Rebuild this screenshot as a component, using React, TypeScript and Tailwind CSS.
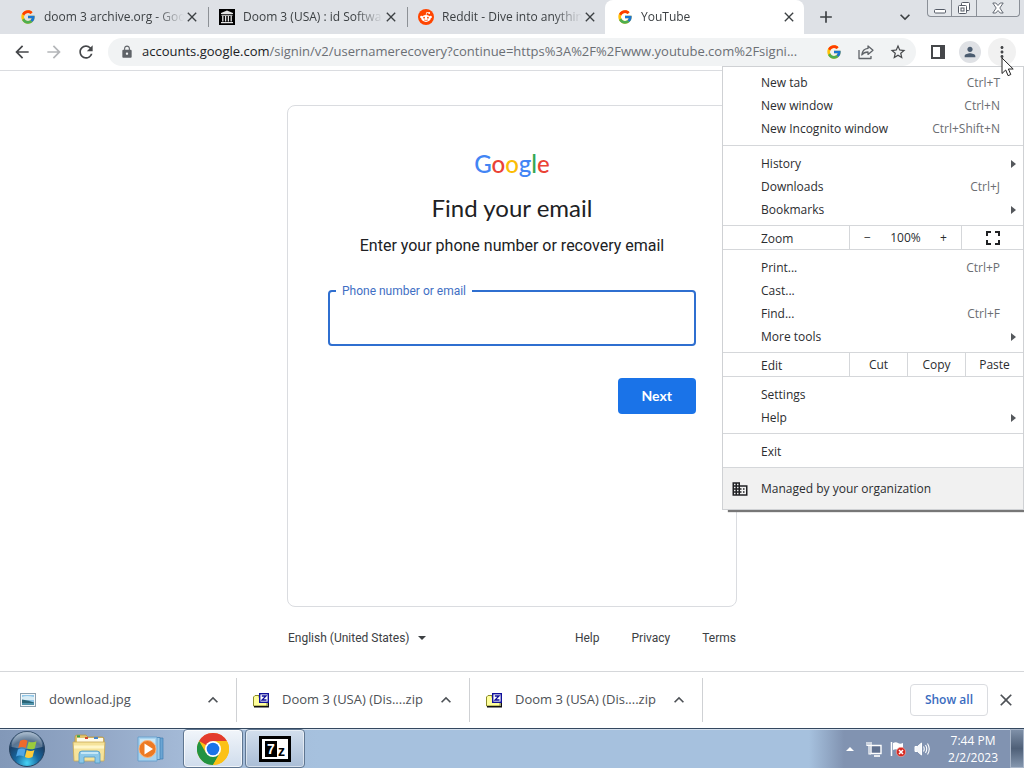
import type { ReactNode } from 'react';
import { FcGoogle } from 'react-icons/fc';
import {
  MdAdd,
  MdArrowBack,
  MdArrowForward,
  MdClose,
  MdDomain,
  MdExpandLess,
  MdExpandMore,
  MdLock,
  MdMoreVert,
  MdPerson,
  MdRefresh,
  MdStarBorder,
} from 'react-icons/md';

function ArchiveIcon() {
  return (
    <svg viewBox="0 0 16 16" className="size-4 shrink-0">
      <rect width="16" height="16" fill="#000" />
      <path d="M8 1.5 14 4v1H2V4zM2.5 5.8h11v.9h-11zM2 13h12v1.2H2z" fill="#e5e5e5" />
      <path d="M3.8 7v5.5M6.6 7v5.5M9.4 7v5.5M12.2 7v5.5" stroke="#e5e5e5" strokeWidth="1.3" />
    </svg>
  );
}

function RedditIcon() {
  return (
    <svg viewBox="0 0 16 16" className="size-4 shrink-0">
      <circle cx="8" cy="8" r="8" fill="#ff4500" />
      <path d="M8 6.4 8.7 3.4l2.3.5" fill="none" stroke="#fff" strokeWidth=".8" />
      <circle cx="11.2" cy="4" r=".9" fill="#fff" />
      <circle cx="3.4" cy="8" r="1.3" fill="#fff" />
      <circle cx="12.6" cy="8" r="1.3" fill="#fff" />
      <ellipse cx="8" cy="9.4" rx="4.7" ry="3.5" fill="#fff" />
      <circle cx="6.1" cy="8.7" r=".9" fill="#ff4500" />
      <circle cx="9.9" cy="8.7" r=".9" fill="#ff4500" />
      <path d="M6 10.9q2 1.2 4 0" fill="none" stroke="#ff4500" strokeWidth=".7" />
    </svg>
  );
}

function ShareIcon() {
  return (
    <svg viewBox="0 0 18 18" className="size-[18px]" fill="none" stroke="#5f6368" strokeWidth="1.3" strokeLinejoin="round">
      <path d="M2 7v8.500h12V13" />
      <path d="M11 3l5 4.2-5 4.2V9C8 9 6.2 10 4.8 12 5.2 8.4 7.300 5.800 11 5.400z" />
    </svg>
  );
}

function SidePanelIcon() {
  return (
    <svg viewBox="0 0 14 14" className="size-3.5">
      <path d="M1 1h12v12H1z" fill="none" stroke="#45474a" strokeWidth="2" />
      <path d="M9 1h4v12H9z" fill="#45474a" />
    </svg>
  );
}

function ImageFileIcon() {
  return (
    <svg viewBox="0 0 16 14" className="h-3.5 w-4">
      <rect x=".5" y=".5" width="15" height="13" fill="#f4f7f9" stroke="#8ba0ae" />
      <rect x="2" y="2" width="12" height="10" fill="#8fc6e8" />
      <path d="M2 4q4-2 12 0v3H2z" fill="#d8ecf5" />
      <path d="M2 6.500q5 .5 12 3V12H2z" fill="#2b6577" />
      <path d="M2 10h12v2H2z" fill="#4f93ab" />
    </svg>
  );
}

function ZipIcon() {
  return (
    <svg viewBox="0 0 16 15" className="h-[15px] w-4">
      <path d="M.5 4 2 2.500h4v2h8V13H.5z" fill="#ffff9c" stroke="#8b8b2a" />
      <path d="M1 13.700h14.500V10" fill="none" stroke="#111" strokeWidth="1.4" />
      <rect x="6.700" y=".7" width="8.600" height="8.600" fill="#fff" stroke="#10109a" strokeWidth="1.4" />
      <path d="M8.800 3h4.200L9 7h4.500" fill="none" stroke="#10109a" strokeWidth="1.3" />
    </svg>
  );
}

function StartOrb() {
  return (
    <svg viewBox="0 0 38 38" className="size-[38px]">
      <defs>
        <radialGradient id="orb" cx="50%" cy="90%" r="85%">
          <stop offset="0" stopColor="#47d3f5" />
          <stop offset=".4" stopColor="#17679f" />
          <stop offset=".75" stopColor="#1b3f66" />
          <stop offset="1" stopColor="#7f9ab5" />
        </radialGradient>
      </defs>
      <circle cx="19" cy="19" r="17.500" fill="url(#orb)" stroke="#27425f" />
      <path d="M3.500 17a15.500 15.500 0 0 1 31 0q-15 4-31 0z" fill="#fff" opacity=".28" />
      <path d="M12 11q4-2.500 7.500-.3L17.800 18q-4-2-7.600.1z" fill="#ee6a2c" />
      <path d="M20.700 11.400q4 2 7.800-.2l-1.800 7.200q-4 2-7.700-.2z" fill="#9bcb3c" />
      <path d="M9.900 19.500q3.800-2 7.600.1l-1.800 7q-4-2.200-7.600 0z" fill="#4fa6e6" />
      <path d="M18.700 19.900q4 2 7.700.1l-1.900 7.100q-4 2-7.600-.1z" fill="#fdcb3a" />
    </svg>
  );
}

function ExplorerIcon() {
  return (
    <svg viewBox="0 0 34 30" className="h-[30px] w-[34px]">
      <path d="M3 3q0-2 2-2h9l2 2h14q2 0 2 2v20H3z" fill="#e2c46c" stroke="#b4954b" strokeWidth=".8" />
      <path d="M5 4h26v5H5z" fill="#fffbe8" />
      <path d="M5 2.300h3" stroke="#35a34b" strokeWidth="2" />
      <path d="M13 4h3" stroke="#d0452f" strokeWidth="2" />
      <path d="M22 4h4" stroke="#4585c9" strokeWidth="2" />
      <path d="M1 8h32l-1 19H2z" fill="#f6e39a" stroke="#c9a956" strokeWidth=".8" />
      <path d="M2 13h30" stroke="#fff6c8" strokeWidth="3" />
      <path d="M7 29V20q0-3 3-3h15q3 0 3 3v9h-5v-6H12v6z" fill="#8cc8e8" stroke="#5399c4" strokeWidth=".8" />
      <path d="M9 19h17" stroke="#d9f2fb" strokeWidth="1.500" />
    </svg>
  );
}

function MediaPlayerIcon() {
  return (
    <svg viewBox="0 0 28 26" className="h-[26px] w-7">
      <path d="M15 2h11v21H15z" fill="#6ba5d3" stroke="#3f7eb5" strokeWidth=".7" />
      <path d="M8 1.500h15v22H8z" fill="#9ccbe9" stroke="#3f7eb5" strokeWidth=".7" />
      <path d="M1 1h19v24H1z" fill="#a9d3ee" stroke="#5e9ccb" strokeWidth=".8" />
      <path d="M3 3h15v5H3z" fill="#c9e7f6" />
      <circle cx="10.500" cy="13" r="8.500" fill="#ed7a24" stroke="#f9b27a" />
      <path d="M7.500 7.500v11l8.500-5.500z" fill="#fff" />
    </svg>
  );
}

function ChromeIcon() {
  return (
    <svg viewBox="0 0 32 32" className="size-8">
      <circle cx="16" cy="16" r="16" fill="#fbc116" />
      <path d="M16 16 2.140 8A16 16 0 0 1 29.860 8H16z" fill="#e33b2e" />
      <path d="M2.140 8A16 16 0 0 0 16 32l6.930-12L16 16 9.070 20z" fill="#229342" />
      <path d="M16 8h13.860A16 16 0 0 1 16 32l6.930-12z" fill="#fbc116" />
      <circle cx="16" cy="16" r="8" fill="#fff" />
      <circle cx="16" cy="16" r="6.300" fill="#1a73e8" />
    </svg>
  );
}

function NetworkIcon() {
  return (
    <svg viewBox="0 0 16 16" className="size-4">
      <path d="M5 4.500h10v8H5z" fill="#60718f" stroke="#fff" strokeWidth="1.400" />
      <path d="M8 15h6" stroke="#fff" strokeWidth="1.600" />
      <path d="M1 1v3.500h4V1M3 1v3M3 4.500V13h2" fill="none" stroke="#fff" strokeWidth="1.200" />
    </svg>
  );
}

function FlagIcon() {
  return (
    <svg viewBox="0 0 16 16" className="size-4">
      <path d="M1.500 1v14" stroke="#fff" strokeWidth="1.500" />
      <path d="M3 2q3-1.500 5 0t5 0v7q-3 1.500-5 0T3 9z" fill="#fff" />
      <circle cx="11" cy="11" r="4.700" fill="#d62a22" stroke="#f5b8b2" strokeWidth=".6" />
      <path d="m9 9 4 4m0-4-4 4" stroke="#fff" strokeWidth="1.500" />
    </svg>
  );
}

function SpeakerIcon() {
  return (
    <svg viewBox="0 0 16 16" className="size-4">
      <path d="M1 5.500h2.500L7.500 2v12l-4-3.500H1z" fill="#f3f6fa" stroke="#fff" />
      <path d="M9.500 5.500q1.500 2.500 0 5M11.500 4q2.500 4 0 8M13.500 2.500q3.500 5.500 0 11" fill="none" stroke="#fff" strokeWidth="1.100" />
    </svg>
  );
}

const tabs = [
  { title: 'doom 3 archive.org - Goo', icon: <FcGoogle className="size-4 shrink-0" />, divider: true },
  { title: 'Doom 3 (USA) : id Softwa', icon: <ArchiveIcon />, divider: true },
  { title: 'Reddit - Dive into anythin', icon: <RedditIcon />, fade: true },
  { title: 'YouTube', icon: <FcGoogle className="size-4 shrink-0" />, active: true },
];

function TabStrip() {
  return (
    <div className="flex h-[34px] bg-[#dee1e6] pl-2">
      {tabs.map((tab) => (
        <div
          key={tab.title}
          className={`flex w-[199px] min-w-0 items-center pl-3 pr-1.5 ${tab.active ? 'rounded-t-lg bg-white' : ''}`}
        >
          {tab.icon}
          <span className="ml-2 min-w-0 flex-1 overflow-hidden whitespace-nowrap text-xs text-[#3c4043] [mask-image:linear-gradient(to_right,#000_80%,transparent)]">
            {tab.title}
          </span>
          <button aria-label="Close tab" className="shrink-0 text-[#3c4043]">
            <MdClose className="size-4" />
          </button>
          <span className={`-mr-2 ml-2 h-5 w-px shrink-0 ${tab.divider ? 'bg-[#8d9196]' : ''}`} />
        </div>
      ))}
      <button aria-label="New tab" className="ml-3 text-[#3c4043]">
        <MdAdd className="size-5" />
      </button>
      <button aria-label="Search tabs" className="ml-auto mr-3 text-[#3c4043]">
        <MdExpandMore className="size-5" />
      </button>
      <div className="mr-1 flex h-[17px] rounded-b border border-t-0 border-[#8a8f97] bg-[#e3e6ea]">
        <button aria-label="Minimize" className="flex w-6 items-center justify-center border-r border-[#8a8f97]">
          <svg viewBox="0 0 12 12" className="size-3">
            <rect x=".5" y="7.500" width="11" height="3.500" rx="1" fill="#fff" stroke="#555b66" />
          </svg>
        </button>
        <button aria-label="Restore" className="flex w-[25px] items-center justify-center border-r border-[#8a8f97]">
          <svg viewBox="0 0 14 14" className="size-3.5" fill="#fff" stroke="#555b66">
            <rect x="4.500" y="1.500" width="8" height="8" rx="1" />
            <rect x="1.500" y="4.500" width="8" height="8" rx="1" />
            <rect x="4" y="7" width="3" height="3" />
          </svg>
        </button>
        <button aria-label="Close" className="flex w-[42px] items-center justify-center">
          <svg viewBox="0 0 12 12" className="size-3" fill="#fff" stroke="#555b66" strokeWidth=".9">
            <path d="M.8 1h3L6 3.500 8.200 1h3L7.800 6l3.400 5h-3L6 8.500 3.800 11h-3l3.400-5z" />
          </svg>
        </button>
      </div>
    </div>
  );
}

function ToolButton({ label, className = '', children }: { label: string; className?: string; children: ReactNode }) {
  return (
    <button aria-label={label} className={`flex size-7 shrink-0 items-center justify-center rounded-full ${className}`}>
      {children}
    </button>
  );
}

function Toolbar() {
  return (
    <div className="flex h-[37px] items-center gap-1 border-b border-[#dadce0] bg-white px-2 text-[#45474a]">
      <ToolButton label="Back">
        <MdArrowBack className="size-5" />
      </ToolButton>
      <ToolButton label="Forward" className="text-[#b4b6b9]">
        <MdArrowForward className="size-5" />
      </ToolButton>
      <ToolButton label="Reload">
        <MdRefresh className="size-5" />
      </ToolButton>
      <div className="ml-1 mr-1 flex h-7 min-w-0 flex-1 items-center gap-1 rounded-full bg-[#f1f3f4] pl-3 pr-1">
        <MdLock className="size-3.5 shrink-0 text-[#5f6368]" />
        <div className="ml-1 min-w-0 flex-1 truncate text-[13px] text-[#6b6f74]">
          <span className="text-[#202124]">accounts.google.com</span>
          /signin/v2/usernamerecovery?continue=https%3A%2F%2Fwww.youtube.com%2Fsigni...
        </div>
        <ToolButton label="Search with Google">
          <FcGoogle className="size-4" />
        </ToolButton>
        <ToolButton label="Share">
          <ShareIcon />
        </ToolButton>
        <ToolButton label="Bookmark this tab">
          <MdStarBorder className="size-[18px]" />
        </ToolButton>
      </div>
      <ToolButton label="Side panel">
        <SidePanelIcon />
      </ToolButton>
      <ToolButton label="Profile">
        <span className="flex size-[22px] items-center justify-center rounded-full bg-[#dfe1e5]">
          <MdPerson className="size-4 text-[#4b5c70]" />
        </span>
      </ToolButton>
      <ToolButton label="Menu" className="bg-[#f1f1f1]">
        <MdMoreVert className="size-[18px]" />
      </ToolButton>
    </div>
  );
}

function MenuItem({ label, shortcut, submenu }: { label: string; shortcut?: string; submenu?: boolean }) {
  return (
    <button className="flex h-[23px] w-full items-center pl-[38px] pr-[23px] text-left">
      <span className="flex-1">{label}</span>
      {shortcut && <span className="text-[#6b6e72]">{shortcut}</span>}
      {submenu && (
        <svg viewBox="0 0 5 8" className="-mr-4 h-2 w-[5px]">
          <path d="M0 0l5 4-5 4z" fill="#55585c" />
        </svg>
      )}
    </button>
  );
}

function MenuGroup({ children }: { children: ReactNode }) {
  return <div className="border-t border-[#d5d7da] pb-1 pt-1.5">{children}</div>;
}

function ChromeMenu() {
  return (
    <div className="absolute right-0 top-[66px] w-[302px] border border-[#cfd1d4] bg-white text-xs text-[#2b2d30] shadow-[5px_3px_1px_-1px_#777]">
      <div className="pb-[5px] pt-1">
        <MenuItem label="New tab" shortcut="Ctrl+T" />
        <MenuItem label="New window" shortcut="Ctrl+N" />
        <MenuItem label="New Incognito window" shortcut="Ctrl+Shift+N" />
      </div>
      <MenuGroup>
        <MenuItem label="History" submenu />
        <MenuItem label="Downloads" shortcut="Ctrl+J" />
        <MenuItem label="Bookmarks" submenu />
      </MenuGroup>
      <div className="flex h-6 items-stretch border-t border-[#d5d7da]">
        <span className="flex flex-1 items-center pl-[38px] pt-0.5">Zoom</span>
        <div className="flex w-28 items-center justify-between border-l border-[#d5d7da] px-3.5">
          <button aria-label="Zoom out">−</button>
          <span>100%</span>
          <button aria-label="Zoom in">+</button>
        </div>
        <button aria-label="Full screen" className="flex w-[62px] items-center justify-center border-l border-[#d5d7da]">
          <svg viewBox="0 0 14 14" className="size-3.5" fill="none" stroke="#202124" strokeWidth="2">
            <path d="M1 5V1h4M9 1h4v4M13 9v4H9M5 13H1V9" />
          </svg>
        </button>
      </div>
      <MenuGroup>
        <MenuItem label="Print..." shortcut="Ctrl+P" />
        <MenuItem label="Cast..." />
        <MenuItem label="Find..." shortcut="Ctrl+F" />
        <MenuItem label="More tools" submenu />
      </MenuGroup>
      <div className="flex h-6 items-stretch border-t border-[#d5d7da]">
        <span className="flex flex-1 items-center pl-[38px] pt-0.5">Edit</span>
        <button className="w-[58px] border-l border-[#d5d7da]">Cut</button>
        <button className="w-[58px] border-l border-[#d5d7da]">Copy</button>
        <button className="w-[58px] border-l border-[#d5d7da]">Paste</button>
      </div>
      <MenuGroup>
        <MenuItem label="Settings" />
        <MenuItem label="Help" submenu />
      </MenuGroup>
      <MenuGroup>
        <MenuItem label="Exit" />
      </MenuGroup>
      <button className="flex h-[42px] w-full items-center gap-3 border-t border-[#d5d7da] bg-[#f1f1f1] pl-2">
        <MdDomain className="size-[18px] text-[#202124]" />
        Managed by your organization
      </button>
    </div>
  );
}

function SignInPage() {
  return (
    <main className="flex flex-1 flex-col items-center bg-white px-4 pt-[34px] font-['Roboto',sans-serif] text-[#202124]">
      <div className="flex min-h-[502px] w-full max-w-[450px] flex-col items-center rounded-lg border border-[#dadce0] px-10 pt-10">
        <div className="font-['Lato',sans-serif] text-2xl font-medium leading-9">
          <span className="text-[#4285f4]">G</span>
          <span className="text-[#ea4335]">o</span>
          <span className="text-[#fbbc05]">o</span>
          <span className="text-[#4285f4]">g</span>
          <span className="text-[#34a853]">l</span>
          <span className="text-[#ea4335]">e</span>
        </div>
        <h1 className="mt-2.5 font-['Lato',sans-serif] text-2xl">Find your email</h1>
        <p className="mt-2.5 text-base">Enter your phone number or recovery email</p>
        <form className="flex w-full flex-col items-end">
          <div className="relative mt-8 w-full">
            <input
              id="identifier"
              type="text"
              className="block h-14 w-full rounded border-2 border-[#2f6fd0] px-3.5 text-base outline-none"
            />
            <label htmlFor="identifier" className="absolute -top-[7px] left-2 bg-white px-1.5 text-xs text-[#3f6fc4]">
              Phone number or email
            </label>
          </div>
          <button
            type="button"
            className="mt-8 h-9 rounded bg-[#1a73e8] px-6 font-['Lato',sans-serif] text-sm font-bold text-white"
          >
            Next
          </button>
        </form>
      </div>
      <footer className="mt-[23px] flex w-full max-w-[450px] items-center px-px text-xs text-[#3c4043]">
        <div className="flex items-center">
          <select aria-label="Language" className="appearance-none bg-transparent">
            <option>English (United States)</option>
          </select>
          <svg viewBox="0 0 8 4" className="ml-2 h-1 w-2">
            <path d="M0 0h8L4 4z" fill="#3c4043" />
          </svg>
        </div>
        <div className="ml-auto flex gap-8">
          <a href="#help">Help</a>
          <a href="#privacy">Privacy</a>
          <a href="#terms">Terms</a>
        </div>
      </footer>
    </main>
  );
}

const downloads = [
  { id: 1, name: 'download.jpg', icon: <ImageFileIcon /> },
  { id: 2, name: 'Doom 3 (USA) (Dis....zip', icon: <ZipIcon /> },
  { id: 3, name: 'Doom 3 (USA) (Dis....zip', icon: <ZipIcon /> },
];

function DownloadShelf() {
  return (
    <div className="flex h-[57px] items-center border-t border-[#d5d7da] bg-white pl-1 text-[#4d5156]">
      {downloads.map((file) => (
        <div key={file.id} className="flex h-11 w-[233px] items-center border-r border-[#cfd1d4] pl-4 pr-[13px]">
          {file.icon}
          <span className="ml-[13px] flex-1 whitespace-nowrap text-[13px]">{file.name}</span>
          <button aria-label="Download options">
            <MdExpandLess className="size-5" />
          </button>
        </div>
      ))}
      <button className="ml-auto h-8 rounded border border-[#dadce0] px-3.5 text-xs font-semibold text-[#3a6cc0]">
        Show all
      </button>
      <button aria-label="Close downloads bar" className="ml-2 mr-2">
        <MdClose className="size-5" />
      </button>
    </div>
  );
}

function Taskbar() {
  return (
    <div className="flex h-10 items-center border-t border-[#34485f] bg-[linear-gradient(to_right,#8298b8_0,#93a8c7_100px,#a3b9d6_180px,#a6c1de_320px,#a6c1de_calc(100%-215px),#8193b1_calc(100%-180px),#8193b1)] shadow-[inset_0_1px_0_#d4e0ee]">
      <button aria-label="Start" className="ml-2">
        <StartOrb />
      </button>
      <button aria-label="Windows Explorer" className="ml-[26px]">
        <ExplorerIcon />
      </button>
      <button aria-label="Media Player" className="ml-[31px]">
        <MediaPlayerIcon />
      </button>
      <button
        aria-label="Google Chrome"
        className="ml-[18px] flex h-[39px] w-[60px] items-center justify-center rounded-sm border border-[#5f7691] bg-linear-to-b from-[#f1f5fa] to-[#cfdcec] ring-1 ring-inset ring-white/70"
      >
        <ChromeIcon />
      </button>
      <button
        aria-label="7-Zip"
        className="ml-[2px] flex h-[39px] w-[60px] items-center justify-center rounded-sm border border-[#5f7691] bg-linear-to-b from-[#d3dfed] to-[#a9bdd6] ring-1 ring-inset ring-white/50"
      >
        <span className="flex h-[26px] w-8 items-center justify-center gap-px border-[3px] border-black bg-white font-['Liberation_Sans',sans-serif] font-bold leading-4">
          <span className="h-4 w-3 bg-black text-center text-sm leading-4 text-white">7</span>
          <span className="pt-1 text-sm leading-3 text-black">z</span>
        </span>
      </button>
      <div className="ml-auto flex h-full items-center gap-2 text-xs text-white">
        <button aria-label="Show hidden icons" className="mr-1">
          <svg viewBox="0 0 8 4" className="h-1 w-2">
            <path d="M4 0l4 4H0z" fill="#fff" />
          </svg>
        </button>
        <NetworkIcon />
        <FlagIcon />
        <SpeakerIcon />
        <div className="ml-2.5 mr-1 text-center leading-[17px]">
          <div>7:44 PM</div>
          <div>2/2/2023</div>
        </div>
        <button
          aria-label="Show desktop"
          className="h-full w-3.5 border border-[#a9b6c9] bg-linear-to-b from-[#7f90a8] via-[#4f6078] to-[#8496ae]"
        />
      </div>
    </div>
  );
}

export default function App() {
  return (
    <div className="relative flex min-h-screen flex-col overflow-hidden bg-white font-['Open_Sans',sans-serif]">
      <TabStrip />
      <Toolbar />
      <SignInPage />
      <DownloadShelf />
      <Taskbar />
      <ChromeMenu />
      <svg viewBox="0 0 13 20" className="absolute right-2.5 top-[57px] h-5 w-[13px]">
        <path d="M1 1v15.500l3.700-3.500 2.400 5.700 2.700-1.200-2.400-5.500h4.800z" fill="#fff" stroke="#222" />
      </svg>
    </div>
  );
}
